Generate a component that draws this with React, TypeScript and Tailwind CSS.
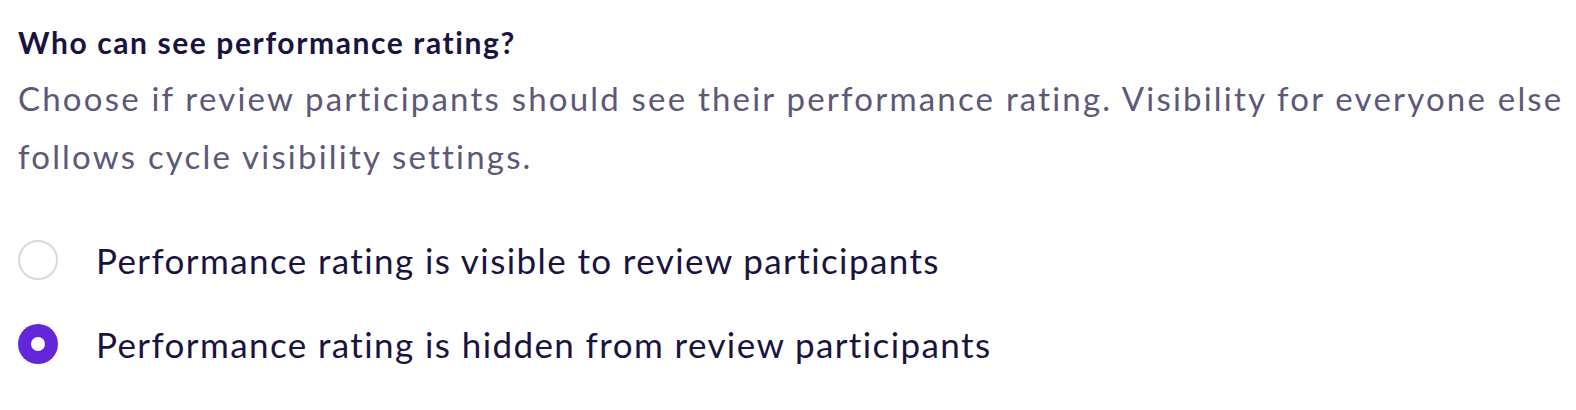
export default function App() {
  const options = [
    { label: "Performance rating is visible to review participants", checked: false },
    { label: "Performance rating is hidden from review participants", checked: true },
  ];

  return (
    <div className="w-[1576px] h-[410px] bg-white pl-[18px] pt-[22px] font-['Lato',sans-serif]">
      <h2 className="text-[30px] leading-[40px] font-bold text-[#1a1340] tracking-[1.6px]">Who can see performance rating?</h2>
      <p className="mt-[7px] text-[33px] leading-[58px] text-[#5d5878] tracking-[2.2px] whitespace-nowrap">
        Choose if review participants should see their performance rating. Visibility for everyone else
        <br />
        follows cycle visibility settings.
      </p>
      <div className="mt-[55px] flex flex-col gap-[44px]">
        {options.map((o) => (
          <label key={o.label} className="flex items-center gap-[38px] cursor-pointer">
            {o.checked ? (
              <span className="w-[40px] h-[40px] rounded-full bg-[#6526d9] flex items-center justify-center">
                <span className="w-[14px] h-[14px] rounded-full bg-white" />
              </span>
            ) : (
              <span className="w-[40px] h-[40px] rounded-full border-2 border-[#d9d9dc] bg-white" />
            )}
            <span className="text-[35px] leading-[40px] text-[#1a1340] tracking-[1.4px]">{o.label}</span>
          </label>
        ))}
      </div>
    </div>
  );
}
